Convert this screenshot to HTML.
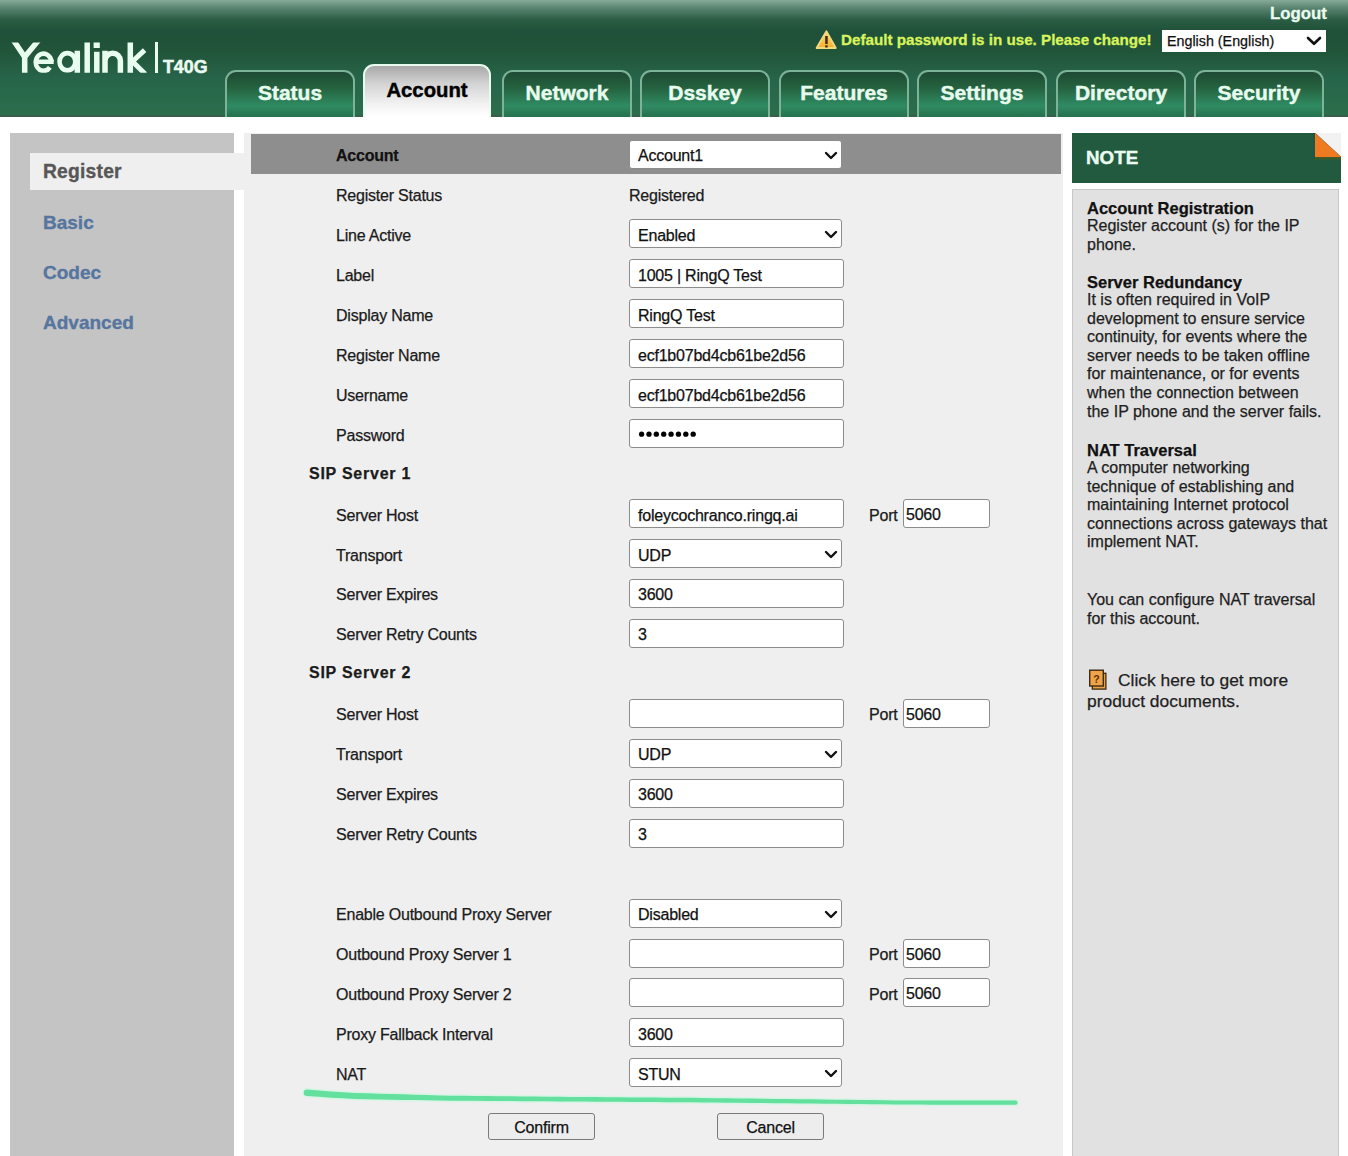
<!DOCTYPE html>
<html><head><meta charset="utf-8">
<style>
*{box-sizing:border-box;margin:0;padding:0}
html,body{width:1348px;height:1156px;overflow:hidden;background:#fff;font-family:"Liberation Sans",sans-serif;position:relative}
.lbl,.sec,.inp,.pinp,.port,.btn,.nt,.lang{-webkit-text-stroke:0.25px currentColor}
.abs{position:absolute}
#hdr{position:absolute;left:0;top:0;width:1348px;height:117px;
background:linear-gradient(#87aa99 0px,#5a8470 8px,#2a5c43 20px,#1f5039 32px,#215439 50px,#27654a 80px,#2b6e4b 114px,#3b5d4c 116px)}
.logo{position:absolute;left:11px;top:28px;color:#eafcf0;font-size:42px;letter-spacing:-0.8px;line-height:60px}
.sep{position:absolute;left:155px;top:42px;width:2px;height:31px;background:#eafcf0}
.model{position:absolute;left:163px;top:57px;-webkit-text-stroke:0.5px #eafcf0;color:#eafcf0;font-weight:bold;font-size:17.8px;line-height:20px}
.logout{-webkit-text-stroke:0.3px currentColor;position:absolute;left:1270px;top:4px;color:#eafcf0;font-weight:bold;font-size:16.8px;line-height:20px}
.warn{position:absolute;left:841px;top:30px;color:#d8f45c;-webkit-text-stroke:0.3px currentColor;font-weight:bold;font-size:15.2px;line-height:20px}
.lang{position:absolute;left:1162px;top:30px;width:164px;height:22px;background:#fff;color:#111;font-size:14.3px;line-height:22px;padding-left:5px}
.tab{position:absolute;top:70px;width:130px;height:47px;border:2.6px solid #7db398;border-bottom:none;border-radius:11px 11px 0 0;
background:linear-gradient(#1e4a34 0%,#25623f 35%,#2f8b62 75%,#27704f 100%);color:#e6fbee;font-weight:bold;font-size:21px;text-align:center;line-height:42px;-webkit-text-stroke:0.45px currentColor}
.tab.act{top:64px;height:53px;width:128px;border:2px solid #e8fbef;border-bottom:none;background:linear-gradient(#a8a8a8 0%,#d4d4d4 35%,#f2f2f2 75%,#fff 100%);color:#000;line-height:48px;font-size:20.3px}
#side{position:absolute;left:10px;top:133px;width:224px;height:1023px;background:#c4c4c4}
.si{position:absolute;left:43px;font-weight:bold;font-size:19px;color:#56759f;line-height:24px;-webkit-text-stroke:0.35px currentColor}
#main{position:absolute;left:244px;top:133px;width:819px;height:1023px;background:#efefef}
#acbar{position:absolute;left:251px;top:134px;width:810px;height:40px;background:#8e8e8e}
.lbl{position:absolute;left:336px;font-size:16px;letter-spacing:-0.22px;color:#1b1b1b;line-height:20px}
.sec{position:absolute;left:309px;font-size:16px;letter-spacing:0.75px;font-weight:bold;color:#1b1b1b;line-height:20px}
.inp{position:absolute;left:629px;width:215px;height:29px;background:#fff;border:1.5px solid #8c8c8c;border-radius:3px;font-size:16px;letter-spacing:-0.22px;color:#111;line-height:26px;padding-left:8px;padding-top:2.5px}
.sel{width:213px}
.chev{position:absolute;left:194px;top:10px}
.port{position:absolute;left:869px;font-size:16px;letter-spacing:-0.22px;color:#1b1b1b;line-height:20px}
.pinp{position:absolute;left:903px;width:87px;height:29px;background:#fff;border:1.5px solid #8c8c8c;border-radius:3px;font-size:16px;letter-spacing:-0.22px;color:#111;line-height:26px;padding-left:2px;padding-top:2px}
.btn{position:absolute;top:1113px;width:107px;height:27px;background:#ededed;border:1.5px solid #7a7a7a;border-radius:3px;font-size:16px;letter-spacing:-0.22px;color:#111;text-align:center;line-height:25px;padding-top:1px}
#notehd{position:absolute;left:1072px;top:133px;width:269px;height:50px;background:#225a3f}
#notebody{position:absolute;left:1072px;top:189px;width:267px;height:967px;background:#e1e1e1;border:1px solid #c8c8c8;border-bottom:none}
.nt{position:absolute;left:1087px;font-size:16px;color:#1e1e1e;line-height:18.6px;width:250px}
.nt b{font-size:16.5px;color:#111;display:block;height:18.6px}
</style></head><body>
<div id="hdr"></div>
<svg class="abs" style="left:0;top:0" width="220" height="90" viewBox="0 0 220 90">
<defs><clipPath id="lc"><rect x="0" y="42.5" width="220" height="30.2"/></clipPath></defs>
<g clip-path="url(#lc)" fill="none" stroke="#e8fcef" stroke-width="5.5">
<path d="M13.3,40 L24.7,57 L38.7,40" stroke-linejoin="miter"/>
<path d="M24.7,55 V75"/>
<path d="M36.2,61.7 H53.7" stroke-width="4.6"/>
<path d="M51.4,61.75 A7.8,8.6 0 1 0 49.9,67.4" stroke-width="4.6"/>
<ellipse cx="67.4" cy="61.75" rx="7.9" ry="8.6" stroke-width="4.6"/>
<path d="M77.3,50.8 V75"/>
<path d="M87.2,40 V75"/>
<path d="M96.8,51.8 V75"/>
<path d="M105,50.8 V75 M105,61 A7.7,7.7 0 0 1 120.4,61 V75"/>
<path d="M130.3,40 V75"/>
<path d="M144.6,50.2 L132.5,61.5 L145.2,74" stroke-width="5" stroke-linejoin="miter"/>
</g>
<rect x="93.6" y="42.5" width="6.2" height="5.5" fill="#e8fcef"/>
<rect x="155" y="42" width="3" height="31" fill="#e8fcef"/>
</svg>
<div class="model">T40G</div>
<div class="logout">Logout</div>
<div class="warn">Default password is in use. Please change!</div>
<div class="lang">English (English)</div>

<div class="tab" style="left:225px">Status</div>
<div class="tab act" style="left:363px">Account</div>
<div class="tab" style="left:502px">Network</div>
<div class="tab" style="left:640px">Dsskey</div>
<div class="tab" style="left:779px">Features</div>
<div class="tab" style="left:917px">Settings</div>
<div class="tab" style="left:1056px">Directory</div>
<div class="tab" style="left:1194px">Security</div>

<div id="side"></div>
<div id="main"></div>
<div class="abs" style="left:30px;top:153px;width:214px;height:37px;background:#efefef"></div>
<div class="si" style="top:160px;color:#575757;font-size:19.3px;letter-spacing:0.2px">Register</div>
<div class="si" style="top:211px">Basic</div>
<div class="si" style="top:261px">Codec</div>
<div class="si" style="top:311px">Advanced</div>

<div id="acbar"></div>

<!--FORM-->
<div class="lbl" style="top:146.0px;font-weight:bold;color:#111">Account</div>
<div class="inp sel" style="top:139.5px">Account1<svg class="chev" width="14" height="10" viewBox="0 0 14 10"><path d="M2,2 L7,7 L12,2" fill="none" stroke="#111" stroke-width="2.4" stroke-linecap="round" stroke-linejoin="round"/></svg></div>
<div class="lbl" style="top:185.95px">Register Status</div>
<div class="lbl" style="left:629px;top:185.95px">Registered</div>
<div class="lbl" style="top:225.9px">Line Active</div>
<div class="inp sel" style="top:219.4px">Enabled<svg class="chev" width="14" height="10" viewBox="0 0 14 10"><path d="M2,2 L7,7 L12,2" fill="none" stroke="#111" stroke-width="2.4" stroke-linecap="round" stroke-linejoin="round"/></svg></div>
<div class="lbl" style="top:265.85px">Label</div>
<div class="inp" style="top:259.35px">1005 | RingQ Test</div>
<div class="lbl" style="top:305.8px">Display Name</div>
<div class="inp" style="top:299.3px">RingQ Test</div>
<div class="lbl" style="top:345.75px">Register Name</div>
<div class="inp" style="top:339.25px">ecf1b07bd4cb61be2d56</div>
<div class="lbl" style="top:385.7px">Username</div>
<div class="inp" style="top:379.2px">ecf1b07bd4cb61be2d56</div>
<div class="lbl" style="top:425.65px">Password</div>
<div class="inp" style="top:419.15px"><svg style="position:absolute;left:0;top:0" width="80" height="26" fill="#000"><circle cx="11.60" cy="14.2" r="2.65"/><circle cx="18.97" cy="14.2" r="2.65"/><circle cx="26.34" cy="14.2" r="2.65"/><circle cx="33.71" cy="14.2" r="2.65"/><circle cx="41.08" cy="14.2" r="2.65"/><circle cx="48.45" cy="14.2" r="2.65"/><circle cx="55.82" cy="14.2" r="2.65"/><circle cx="63.19" cy="14.2" r="2.65"/></svg></div>
<div class="sec" style="top:463.6px">SIP Server 1</div>
<div class="lbl" style="top:505.54999999999995px">Server Host</div>
<div class="inp" style="top:499.05px">foleycochranco.ringq.ai</div>
<div class="port" style="top:505.54999999999995px">Port</div>
<div class="pinp" style="top:499.05px">5060</div>
<div class="lbl" style="top:545.5px">Transport</div>
<div class="inp sel" style="top:539.0px">UDP<svg class="chev" width="14" height="10" viewBox="0 0 14 10"><path d="M2,2 L7,7 L12,2" fill="none" stroke="#111" stroke-width="2.4" stroke-linecap="round" stroke-linejoin="round"/></svg></div>
<div class="lbl" style="top:585.45px">Server Expires</div>
<div class="inp" style="top:578.95px">3600</div>
<div class="lbl" style="top:625.4px">Server Retry Counts</div>
<div class="inp" style="top:618.9px">3</div>
<div class="sec" style="top:663.35px">SIP Server 2</div>
<div class="lbl" style="top:705.3px">Server Host</div>
<div class="inp" style="top:698.8px"></div>
<div class="port" style="top:705.3px">Port</div>
<div class="pinp" style="top:698.8px">5060</div>
<div class="lbl" style="top:745.25px">Transport</div>
<div class="inp sel" style="top:738.75px">UDP<svg class="chev" width="14" height="10" viewBox="0 0 14 10"><path d="M2,2 L7,7 L12,2" fill="none" stroke="#111" stroke-width="2.4" stroke-linecap="round" stroke-linejoin="round"/></svg></div>
<div class="lbl" style="top:785.2px">Server Expires</div>
<div class="inp" style="top:778.7px">3600</div>
<div class="lbl" style="top:825.15px">Server Retry Counts</div>
<div class="inp" style="top:818.65px">3</div>
<div class="lbl" style="top:905.05px">Enable Outbound Proxy Server</div>
<div class="inp sel" style="top:898.55px">Disabled<svg class="chev" width="14" height="10" viewBox="0 0 14 10"><path d="M2,2 L7,7 L12,2" fill="none" stroke="#111" stroke-width="2.4" stroke-linecap="round" stroke-linejoin="round"/></svg></div>
<div class="lbl" style="top:945.0px">Outbound Proxy Server 1</div>
<div class="inp" style="top:938.5px"></div>
<div class="port" style="top:945.0px">Port</div>
<div class="pinp" style="top:938.5px">5060</div>
<div class="lbl" style="top:984.95px">Outbound Proxy Server 2</div>
<div class="inp" style="top:978.45px"></div>
<div class="port" style="top:984.95px">Port</div>
<div class="pinp" style="top:978.45px">5060</div>
<div class="lbl" style="top:1024.9px">Proxy Fallback Interval</div>
<div class="inp" style="top:1018.4px">3600</div>
<div class="lbl" style="top:1064.85px">NAT</div>
<div class="inp sel" style="top:1058.35px">STUN<svg class="chev" width="14" height="10" viewBox="0 0 14 10"><path d="M2,2 L7,7 L12,2" fill="none" stroke="#111" stroke-width="2.4" stroke-linecap="round" stroke-linejoin="round"/></svg></div>
<div class="btn" style="left:488px">Confirm</div>
<div class="btn" style="left:717px">Cancel</div>
<!--/FORM-->
<div id="notehd"></div>
<div id="notebody"></div>
<div class="abs" style="left:1086px;top:147px;color:#eafcf0;font-weight:bold;font-size:18.8px;line-height:22px;-webkit-text-stroke:0.4px currentColor">NOTE</div>
<svg class="abs" style="left:1313px;top:133px" width="28" height="27" viewBox="0 0 28 27"><rect x="0" y="0" width="2.2" height="26" fill="#1d5747"/><rect x="2" y="23.5" width="26" height="3" fill="#3d5a28"/><polygon points="2,0 28,24 2,24" fill="#f07a22"/><polygon points="2,0 28,0 28,24" fill="#f2f2f2"/><line x1="2" y1="0" x2="28" y2="24" stroke="#c06a2a" stroke-width="0.9"/></svg>
<div class="nt" style="top:198.5px"><b>Account Registration</b>Register account (s) for the IP<br>phone.</div>
<div class="nt" style="top:272.5px"><b>Server Redundancy</b>It is often required in VoIP<br>development to ensure service<br>continuity, for events where the<br>server needs to be taken offline<br>for maintenance, or for events<br>when the connection between<br>the IP phone and the server fails.</div>
<div class="nt" style="top:440.5px"><b>NAT Traversal</b>A computer networking<br>technique of establishing and<br>maintaining Internet protocol<br>connections across gateways that<br>implement NAT.</div>
<div class="nt" style="top:591px">You can configure NAT traversal<br>for this account.</div>
<svg class="abs" style="left:1088px;top:669px" width="20" height="22" viewBox="0 0 20 22"><rect x="4.3" y="4.3" width="13.6" height="15.8" fill="#e8a048" stroke="#3e2a10" stroke-width="1.3"/><rect x="1.7" y="1.2" width="13.6" height="15.8" fill="#f0a448" stroke="#3e2a10" stroke-width="1.4"/><text x="8.5" y="13.6" font-family="Liberation Sans" font-weight="bold" font-size="10.5" text-anchor="middle" fill="#5a3008">?</text></svg>
<div class="nt" style="top:670px;font-size:17.4px;line-height:20.5px"><span style="display:inline-block;width:31px"></span>Click here to get more<br>product documents.</div>
<svg class="abs" style="left:814px;top:28px" width="24" height="23" viewBox="0 0 24 23"><defs><linearGradient id="wg" x1="0" y1="0" x2="0" y2="1"><stop offset="0" stop-color="#f6dc86"/><stop offset="1" stop-color="#f5ad2c"/></linearGradient></defs><path d="M12.4 3.2 L21.8 20 L2.6 20 Z" fill="url(#wg)" stroke="#f0da80" stroke-width="1.8" stroke-linejoin="round"/><rect x="11.2" y="8" width="2.5" height="8" fill="#4a2a08"/><rect x="11.2" y="17.4" width="2.5" height="2.1" fill="#4a2a08"/></svg>
<svg class="abs" style="left:1305px;top:35px" width="18" height="12" viewBox="0 0 18 12"><path d="M3,3 L9,8.8 L15,3" fill="none" stroke="#111" stroke-width="2.6" stroke-linecap="round" stroke-linejoin="round"/></svg>
<svg class="abs" style="left:0;top:0" width="1348" height="1156"><path d="M307.0,1089.40 L319.0,1090.42 L331.0,1091.41 L343.0,1092.16 L355.0,1092.91 L367.0,1093.36 L379.1,1093.69 L391.1,1094.03 L403.1,1094.37 L415.1,1094.71 L427.1,1095.05 L439.1,1095.39 L451.1,1095.71 L463.1,1095.83 L475.1,1095.95 L487.1,1096.07 L499.1,1096.19 L511.1,1096.31 L523.2,1096.43 L535.2,1096.55 L547.2,1096.67 L559.2,1096.79 L571.2,1096.89 L583.2,1096.99 L595.2,1097.08 L607.2,1097.18 L619.2,1097.28 L631.2,1097.38 L643.2,1097.47 L655.2,1097.57 L667.3,1097.67 L679.3,1097.76 L691.3,1097.87 L703.3,1098.02 L715.3,1098.17 L727.3,1098.32 L739.3,1098.47 L751.3,1098.62 L763.3,1098.77 L775.3,1098.92 L787.3,1099.07 L799.3,1099.22 L811.4,1099.37 L823.4,1099.52 L835.4,1099.67 L847.4,1099.82 L859.4,1099.97 L871.4,1100.12 L883.4,1100.27 L895.4,1100.42 L907.4,1100.57 L919.4,1100.60 L931.4,1100.60 L943.4,1100.60 L955.5,1100.60 L967.5,1100.60 L979.5,1100.60 L991.5,1100.60 L1003.5,1100.60 L1015.5,1100.60 A2.10,2.10 0 0 1 1015.5,1104.80 L1003.5,1104.78 L991.5,1104.75 L979.5,1104.73 L967.5,1104.71 L955.5,1104.69 L943.4,1104.66 L931.4,1104.64 L919.4,1104.62 L907.4,1104.57 L895.4,1104.45 L883.4,1104.33 L871.4,1104.21 L859.4,1104.08 L847.4,1103.96 L835.4,1103.84 L823.4,1103.71 L811.4,1103.59 L799.3,1103.47 L787.3,1103.35 L775.3,1103.22 L763.3,1103.10 L751.3,1102.98 L739.3,1102.85 L727.3,1102.73 L715.3,1102.61 L703.3,1102.49 L691.3,1102.36 L679.3,1102.27 L667.3,1102.18 L655.2,1102.10 L643.2,1102.01 L631.2,1101.92 L619.2,1101.83 L607.2,1101.75 L595.2,1101.66 L583.2,1101.57 L571.2,1101.48 L559.2,1101.39 L547.2,1101.32 L535.2,1101.24 L523.2,1101.17 L511.1,1101.09 L499.1,1101.01 L487.1,1100.94 L475.1,1100.86 L463.1,1100.78 L451.1,1100.71 L439.1,1100.51 L427.1,1100.30 L415.1,1100.09 L403.1,1099.88 L391.1,1099.67 L379.1,1099.47 L367.0,1099.26 L355.0,1098.95 L343.0,1098.32 L331.0,1097.70 L319.0,1096.86 L307.0,1096.00 A3.30,3.30 0 0 1 307.0,1089.40 Z" fill="#c6f5dc" stroke="#d2f7e3" stroke-width="3" opacity="0.8"/><path d="M307.0,1089.40 L319.0,1090.42 L331.0,1091.41 L343.0,1092.16 L355.0,1092.91 L367.0,1093.36 L379.1,1093.69 L391.1,1094.03 L403.1,1094.37 L415.1,1094.71 L427.1,1095.05 L439.1,1095.39 L451.1,1095.71 L463.1,1095.83 L475.1,1095.95 L487.1,1096.07 L499.1,1096.19 L511.1,1096.31 L523.2,1096.43 L535.2,1096.55 L547.2,1096.67 L559.2,1096.79 L571.2,1096.89 L583.2,1096.99 L595.2,1097.08 L607.2,1097.18 L619.2,1097.28 L631.2,1097.38 L643.2,1097.47 L655.2,1097.57 L667.3,1097.67 L679.3,1097.76 L691.3,1097.87 L703.3,1098.02 L715.3,1098.17 L727.3,1098.32 L739.3,1098.47 L751.3,1098.62 L763.3,1098.77 L775.3,1098.92 L787.3,1099.07 L799.3,1099.22 L811.4,1099.37 L823.4,1099.52 L835.4,1099.67 L847.4,1099.82 L859.4,1099.97 L871.4,1100.12 L883.4,1100.27 L895.4,1100.42 L907.4,1100.57 L919.4,1100.60 L931.4,1100.60 L943.4,1100.60 L955.5,1100.60 L967.5,1100.60 L979.5,1100.60 L991.5,1100.60 L1003.5,1100.60 L1015.5,1100.60 A2.10,2.10 0 0 1 1015.5,1104.80 L1003.5,1104.78 L991.5,1104.75 L979.5,1104.73 L967.5,1104.71 L955.5,1104.69 L943.4,1104.66 L931.4,1104.64 L919.4,1104.62 L907.4,1104.57 L895.4,1104.45 L883.4,1104.33 L871.4,1104.21 L859.4,1104.08 L847.4,1103.96 L835.4,1103.84 L823.4,1103.71 L811.4,1103.59 L799.3,1103.47 L787.3,1103.35 L775.3,1103.22 L763.3,1103.10 L751.3,1102.98 L739.3,1102.85 L727.3,1102.73 L715.3,1102.61 L703.3,1102.49 L691.3,1102.36 L679.3,1102.27 L667.3,1102.18 L655.2,1102.10 L643.2,1102.01 L631.2,1101.92 L619.2,1101.83 L607.2,1101.75 L595.2,1101.66 L583.2,1101.57 L571.2,1101.48 L559.2,1101.39 L547.2,1101.32 L535.2,1101.24 L523.2,1101.17 L511.1,1101.09 L499.1,1101.01 L487.1,1100.94 L475.1,1100.86 L463.1,1100.78 L451.1,1100.71 L439.1,1100.51 L427.1,1100.30 L415.1,1100.09 L403.1,1099.88 L391.1,1099.67 L379.1,1099.47 L367.0,1099.26 L355.0,1098.95 L343.0,1098.32 L331.0,1097.70 L319.0,1096.86 L307.0,1096.00 A3.30,3.30 0 0 1 307.0,1089.40 Z" fill="#63e09d"/></svg>
</body></html>
